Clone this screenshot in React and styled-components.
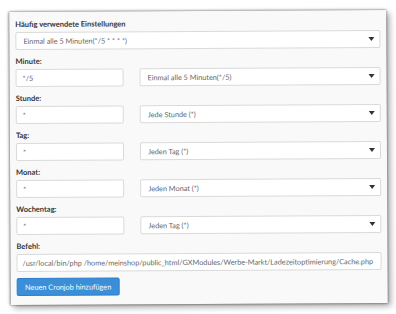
import React from "react";
import styled, { createGlobalStyle } from "styled-components";

const GlobalStyle = createGlobalStyle`
  html, body {
    margin: 0;
    padding: 0;
    background: #ffffff;
  }
  body {
    font-family: "Lato", "Open Sans", sans-serif;
  }
`;

const Page = styled.div`
  width: 396px;
  height: 314px;
  padding: 11px 0 0 10px;
  box-sizing: border-box;
  overflow: hidden;
`;

const Panel = styled.div`
  width: 377px;
  box-sizing: border-box;
  background: #f9f9f9;
  padding: 7px 6px 9px 6px;
  display: flex;
  flex-direction: column;
  gap: 6px;
  box-shadow: 0 0 2px rgba(0, 0, 0, 0.55), 3px 3px 6px rgba(0, 0, 0, 0.35),
    -1px 0 3px rgba(0, 0, 0, 0.25);
  transform: rotate(-0.3deg);
`;

const Group = styled.div`
  display: flex;
  flex-direction: column;
  gap: 1px;
`;

const Label = styled.div`
  font-size: 7.5px;
  line-height: 12px;
  font-weight: 700;
  color: #333;
`;

const Row = styled.div`
  display: flex;
  gap: 16px;
`;

const Box = styled.div`
  height: 18px;
  flex-shrink: 0;
  box-sizing: border-box;
  background: #fff;
  border: 1px solid #dadada;
  border-radius: 2px;
  display: flex;
  align-items: center;
  padding: 0 5px 0 ${(p) => (p.$pad ? p.$pad : 6)}px;
  font-size: 7.3px;
  color: #666;
  white-space: nowrap;
  overflow: hidden;
  min-width: 0;
  width: ${(p) => (p.$w ? `${p.$w}px` : "auto")};
  flex-grow: ${(p) => (p.$grow ? 1 : 0)};
`;

const SelectText = styled.span`
  flex: 1;
  overflow: hidden;
`;

const Arrow = styled.span`
  width: 0;
  height: 0;
  border-left: 3px solid transparent;
  border-right: 3px solid transparent;
  border-top: 4px solid #333;
  margin-left: 4px;
`;

const Button = styled.button`
  align-self: flex-start;
  height: 18px;
  width: 103px;
  padding: 0;
  border: 1px solid #2f7dc6;
  border-radius: 2px;
  background: #3b8fd9;
  color: #fff;
  font-family: "Lato", "Open Sans", sans-serif;
  font-size: 7.3px;
`;

const Select = ({ children, grow }) => (
  <Box $pad={7} $grow={grow}>
    <SelectText>{children}</SelectText>
    <Arrow />
  </Box>
);

const fields = [
  ["Minute:", "*/5", "Einmal alle 5 Minuten(*/5)"],
  ["Stunde:", "*", "Jede Stunde (*)"],
  ["Tag:", "*", "Jeden Tag (*)"],
  ["Monat:", "*", "Jeden Monat (*)"],
  ["Wochentag:", "*", "Jeden Tag (*)"],
];

export default function App() {
  return (
    <Page>
      <GlobalStyle />
      <Panel>
        <Group>
          <Label>Häufig verwendete Einstellungen</Label>
          <Select>Einmal alle 5 Minuten(*/5 * * * *)</Select>
        </Group>
        {fields.map(([label, value, choice]) => (
          <Group key={label}>
            <Label>{label}</Label>
            <Row>
              <Box $w={108}>{value}</Box>
              <Select grow>{choice}</Select>
            </Row>
          </Group>
        ))}
        <Group>
          <Label>Befehl:</Label>
          <Box $pad={5}>
            /usr/local/bin/php
            /home/meinshop/public_html/GXModules/Werbe-Markt/Ladezeitoptimierung/Cache.php
          </Box>
        </Group>
        <Button>Neuen Cronjob hinzufügen</Button>
      </Panel>
    </Page>
  );
}
